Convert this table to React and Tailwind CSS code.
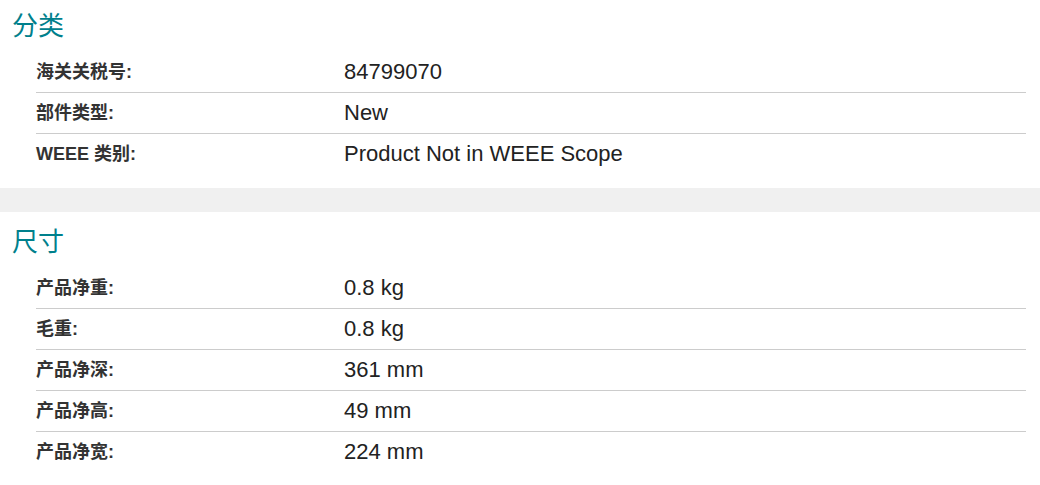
const sections = [
  {
    title: "分类",
    pad: "pt-2",
    rows: [
      ["海关关税号:", "84799070"],
      ["部件类型:", "New"],
      ["WEEE 类别:", "Product Not in WEEE Scope"],
    ],
  },
  {
    title: "尺寸",
    pad: "pt-3",
    rows: [
      ["产品净重:", "0.8 kg"],
      ["毛重:", "0.8 kg"],
      ["产品净深:", "361 mm"],
      ["产品净高:", "49 mm"],
      ["产品净宽:", "224 mm"],
    ],
  },
];

const font = {
  fontFamily: '"Liberation Sans", "Noto Sans CJK SC", sans-serif',
};

const Section = ({ title, pad, rows }) => {
  return (
    <div className={`bg-white ${pad} pb-[14px]`}>
      <h2 className="h-9 flex items-center pl-3 text-[26px] font-normal text-[#00808c] mb-2">
        {title}
      </h2>
      <div className="ml-9 mr-[14px]">
        {rows.map(([label, value], i) => (
          <div
            key={label}
            className={`flex items-center ${
              i < rows.length - 1 ? "h-[41px] border-b border-[#cccccc]" : "h-10"
            }`}
          >
            <div className="w-[308px] shrink-0 text-[18px] font-bold text-[#333333]">
              {label}
            </div>
            <div className="text-[22px] text-[#222222] pb-[2px]">{value}</div>
          </div>
        ))}
      </div>
    </div>
  );
};

export default function App() {
  return (
    <div className="w-[1040px] h-[485px] bg-white overflow-hidden" style={font}>
      <Section {...sections[0]} />
      <div className="h-6 bg-[#f0f0f0]"></div>
      <Section {...sections[1]} />
    </div>
  );
}
